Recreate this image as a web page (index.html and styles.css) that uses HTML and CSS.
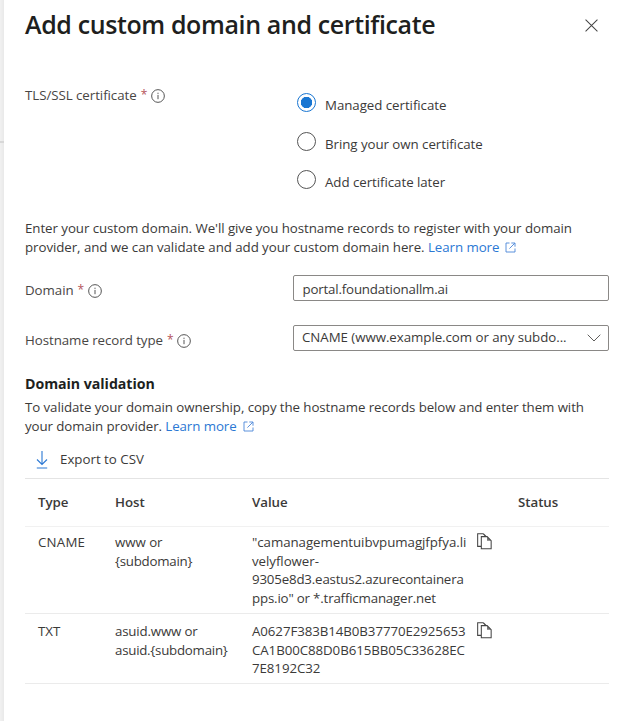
FILE: index.html
```html
<!DOCTYPE html>
<html lang="en">
<head>
<meta charset="utf-8">
<title>Add custom domain and certificate</title>
<link rel="stylesheet" href="styles.css">
</head>
<body>
<svg class="sprite" aria-hidden="true">
  <symbol id="info" viewBox="0 0 14 14"><circle cx="7" cy="7" r="6.35" fill="none" stroke="currentColor" stroke-width="1"/><path d="M7 5.9v4.3M7 3.7v1.2" stroke="currentColor" stroke-width="1"/></symbol>
  <symbol id="external" viewBox="0 0 11 11"><path d="M4.5 1H1v9h9V6.5M6.3 1H10v3.7M9.8 1.2L4.4 6.6" fill="none" stroke="currentColor" stroke-width=".9"/></symbol>
  <symbol id="copy" viewBox="0 0 16 18"><path d="M4.5 14.2H.7V.7h5.8l3 3M4.6 3.8h6.2l4.3 4.3v8.6H4.6z" fill="none" stroke="currentColor" stroke-width="1.1"/><path d="M6.5.6h1.2l3.2 3.2-1 .4zM10.7 3.8l4.4 4.4h-4.4z" fill="currentColor" fill-opacity=".75"/></symbol>
</svg>
<aside class="edge"><span class="edge-rule"></span></aside>
<main class="panel">
  <header class="header">
    <h1 class="title">Add custom domain and certificate</h1>
    <svg class="close" viewBox="0 0 14 14"><path d="M.6.6l12.8 12.8M13.4.6L.6 13.4" stroke="currentColor" stroke-width="1.1"/></svg>
  </header>
  <section class="field certificate">
    <div class="label"><span>TLS/SSL certificate</span><span class="required">*</span><svg class="info"><use href="#info"/></svg></div>
    <div class="radios">
      <div class="option"><span class="radio selected"></span><span class="option-text">Managed certificate</span></div>
      <div class="option"><span class="radio"></span><span class="option-text">Bring your own certificate</span></div>
      <div class="option"><span class="radio"></span><span class="option-text">Add certificate later</span></div>
    </div>
  </section>
  <p class="text intro">Enter your custom domain. We'll give you hostname records to register with your domain<br>provider, and we can validate and add your custom domain here. <a class="link">Learn more</a><svg class="external"><use href="#external"/></svg></p>
  <section class="field domain">
    <div class="label"><span>Domain</span><span class="required">*</span><svg class="info"><use href="#info"/></svg></div>
    <div class="box"><span class="tight">portal.foundationallm.ai</span></div>
  </section>
  <section class="field record">
    <div class="label"><span>Hostname record type</span><span class="required">*</span><svg class="info"><use href="#info"/></svg></div>
    <div class="box select"><span>CNAME (www.example.com or any subdo...</span><svg class="chevron" viewBox="0 0 14 8"><path d="M.7.7L7 7 13.3.7" fill="none" stroke="currentColor" stroke-width="1"/></svg></div>
  </section>
  <h2 class="subtitle">Domain validation</h2>
  <p class="text snug">To validate your domain ownership, copy the hostname records below and enter them with<br>your domain provider. <a class="link">Learn more</a><svg class="external"><use href="#external"/></svg></p>
  <div class="export"><svg class="download" viewBox="0 0 12 18"><path d="M6 0v13.2M1 8.5l5 5 5-5M.8 17h10.4" fill="none" stroke="currentColor" stroke-width="1.1"/></svg><span class="export-text">Export to CSV</span></div>
  <div class="table">
    <div class="row head"><span>Type</span><span>Host</span><span>Value</span><span></span><span>Status</span></div>
    <div class="row cname"><span class="wide">CNAME</span><span>www or<br><span class="tighter">{subdomain}</span></span><span>"camanagementuibvpumagjfpfya.li<br>velyflower-<br><span class="tight">9305e8d3.eastus2.azurecontainera<br>pps.io" or *.trafficmanager.net</span></span><svg class="copy"><use href="#copy"/></svg></div>
    <div class="row txt"><span>TXT</span><span><span class="tight">asuid.www or</span><br><span class="tighter">asuid.{subdomain}</span></span><span class="snug">A0627F383B14B0B37770E2925653<br>CA1B00C88D0B615BB05C33628EC<br>7E8192C32</span><svg class="copy"><use href="#copy"/></svg></div>
  </div>
</main>
</body>
</html>
```
FILE: styles.css
```css
* { box-sizing: border-box; }
body {
  margin: 0;
  height: 721px;
  display: flex;
  overflow: hidden;
  background: #fff;
  color: #3b3a39;
  font: 13.3px/18.5px "Open Sans", "Noto Sans", sans-serif;
  letter-spacing: -0.05px;
  white-space: nowrap;
}
svg { flex: none; overflow: visible; }
.sprite { display: none; }
h1, h2, p { margin: 0; }
.wide { letter-spacing: 0.2px; }
.snug { letter-spacing: -0.08px; }
.tight { letter-spacing: -0.18px; }
.tighter { letter-spacing: -0.25px; }
.edge { flex: 0 0 4px; background: linear-gradient(90deg, #f1f1f1, #e9e9e9); padding-top: 141px; }
.edge-rule { display: block; height: 2px; background: #d8d8d8; }
.panel { flex: 1; padding: 0 15px 0 21px; }
.header { height: 49px; display: flex; align-items: center; justify-content: space-between; padding-right: 11px; }
.title { font-size: 25px; line-height: 34px; margin-top: -2px; font-weight: 600; color: #201f1e; letter-spacing: -0.38px; }
.close { width: 13px; height: 13px; margin-top: 2px; color: #444; }
.field { display: grid; grid-template-columns: 268px 1fr; }
.label { display: flex; align-items: center; height: 20px; color: #484644; }
.required { color: #b4535a; margin-left: 4px; width: 6px; font-size: 12px; }
.info { width: 14px; height: 14px; margin: 1px 0 0 4px; color: #555; }
.certificate { height: 170px; padding-top: 36px; }
.radios { padding: 8px 0 0 4px; }
.option { display: flex; height: 38.5px; }
.radio { width: 19px; height: 19px; border: 1px solid #555; border-radius: 50%; }
.selected { border-color: #1976d2; background: radial-gradient(circle, #1976d2 5.4px, transparent 6px); }
.option-text { margin: 3px 0 0 9px; }
.intro { height: 56px; letter-spacing: -0.06px; }
.link { color: #2b78d4; }
.external { width: 11px; height: 11px; margin-left: 6px; color: #4a86d8; vertical-align: -1px; }
.domain { height: 49.5px; }
.domain .label { margin-top: 5px; }
.record .label { margin-top: 6px; }
.record { height: 49.5px; }
.box { height: 26px; border: 1px solid #8a8886; border-radius: 2px; padding: 2px 7px 0 8.5px; display: flex; align-items: center; justify-content: space-between; }
.select { padding: 0 7px 0 8px; }
.chevron { width: 14px; height: 8px; color: #605e5c; }
.subtitle { font-size: 14.2px; line-height: 20px; height: 24px; font-weight: 700; color: #201f1e; }
.export { height: 43px; padding: 6px 0 0 11px; display: flex; align-items: center; }
.download { width: 12px; height: 18px; color: #2b78d4; }
.export-text { margin-left: 12px; letter-spacing: 0; }
.table { border-top: 1px solid #e4e4e4; }
.row { display: grid; grid-template-columns: 77px 137px 225px 41px 1fr; padding: 6px 0 0 13px; border-bottom: 1px solid #ebebeb; }
.head { height: 48px; padding-top: 14px; font-weight: 600; border-bottom-color: #f1f1f1; }
.cname { height: 87px; }
.txt { height: 70px; padding-top: 8px; }
.copy { width: 15px; height: 17px; color: #444; }
```
